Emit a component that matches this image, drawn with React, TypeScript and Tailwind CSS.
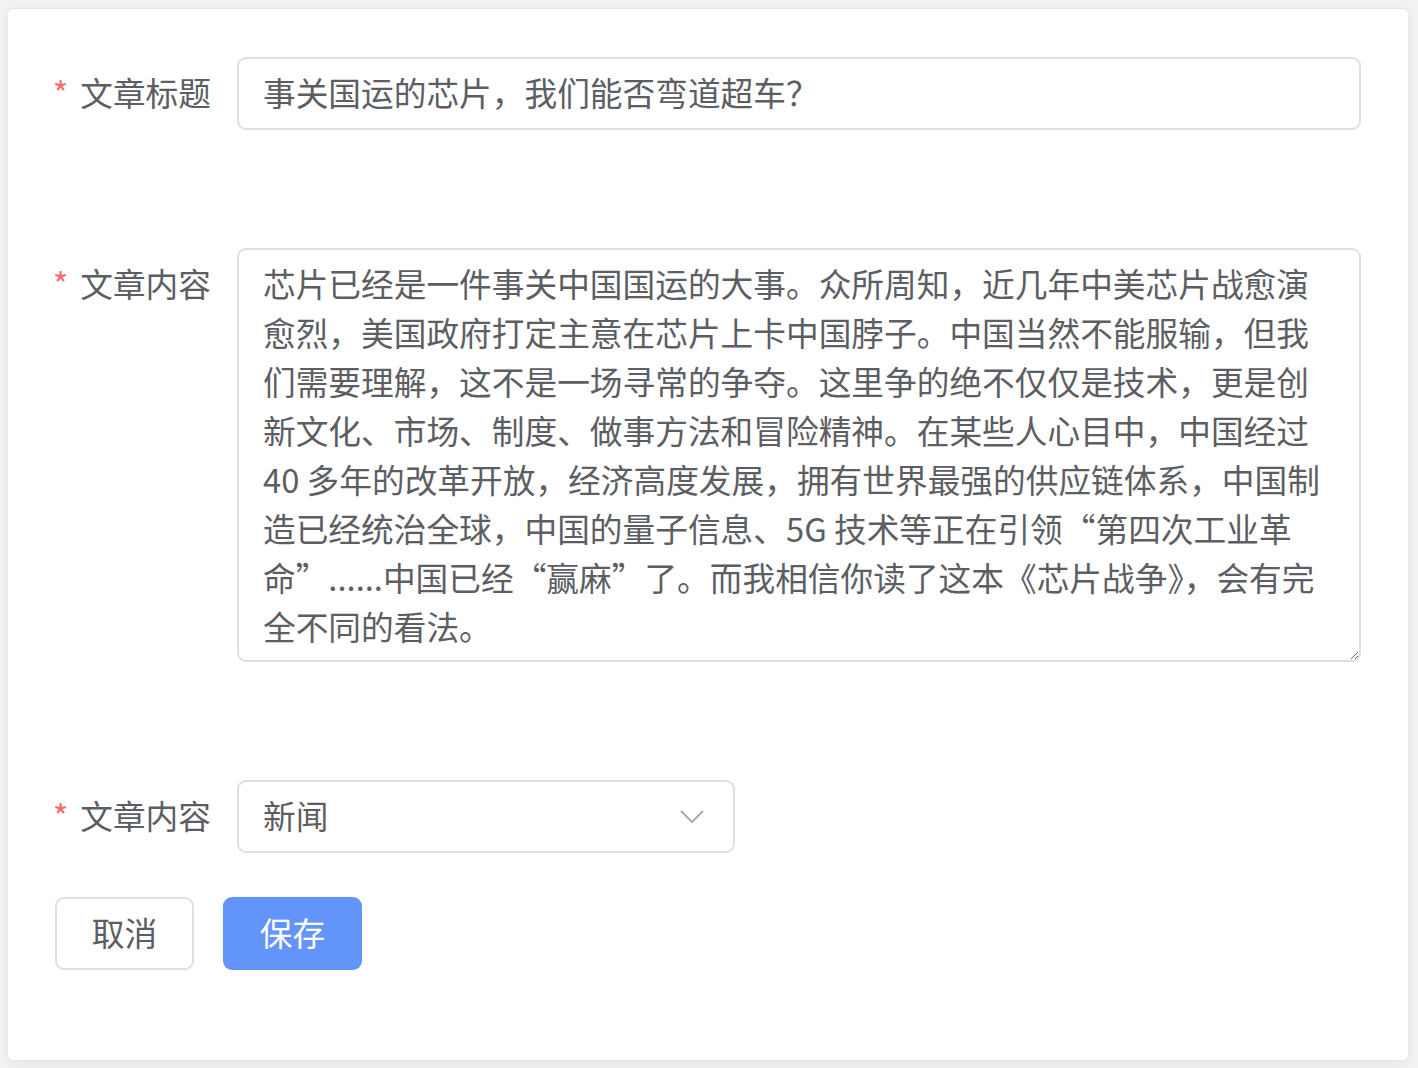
import React from "react";

const font = { fontFamily: '"Noto Sans CJK SC", "Liberation Sans", sans-serif' };

const content = [
  "芯片已经是一件事关中国国运的大事。众所周知，近几年中美芯片战愈演",
  "愈烈，美国政府打定主意在芯片上卡中国脖子。中国当然不能服输，但我",
  "们需要理解，这不是一场寻常的争夺。这里争的绝不仅仅是技术，更是创",
  "新文化、市场、制度、做事方法和冒险精神。在某些人心目中，中国经过",
  "40 多年的改革开放，经济高度发展，拥有世界最强的供应链体系，中国制",
  "造已经统治全球，中国的量子信息、5G 技术等正在引领“第四次工业革",
  "命”......中国已经“赢麻”了。而我相信你读了这本《芯片战争》，会有完",
  "全不同的看法。",
].join("\n");

function Label({ text }: { text: string }) {
  return (
    <label className="flex h-[73px] w-[182px] shrink-0 items-center justify-end whitespace-nowrap pb-[4px] pr-[26px] text-[32.7px] text-[#5c5e63]">
      <span className="mr-[12px] text-[#f56c6c]">*</span>
      <span>{text}</span>
    </label>
  );
}

export default function App() {
  return (
    <div className="min-h-screen bg-[#f2f2f2] pl-[7px] pt-[8px]" style={font}>
      <div className="h-[1053px] w-[1402px] rounded-[6px] border border-[#e4e7ed] bg-white shadow-[0_2px_10px_0_rgba(0,0,0,0.06)]">
        <form className="pl-[47px] pt-[48px]" onSubmit={(e) => e.preventDefault()}>
          <div className="flex items-start">
            <Label text="文章标题" />
            <input
              defaultValue="事关国运的芯片，我们能否弯道超车？"
              className="h-[73px] w-[1124px] rounded-[9px] border-2 border-[#dcdfe6] bg-white px-[24px] pb-[5px] text-[32.7px] text-[#5c5e63] outline-none"
            />
          </div>

          <div className="mt-[118px] flex items-start">
            <Label text="文章内容" />
            <textarea
              defaultValue={content}
              wrap="off"
              className="h-[414px] w-[1124px] resize-y overflow-hidden rounded-[9px] border-2 border-[#dcdfe6] bg-white px-[24px] pt-[8px] text-[32.7px] leading-[49px] text-[#5c5e63] outline-none"
            />
          </div>

          <div className="mt-[118px] flex items-start">
            <Label text="文章内容" />
            <div className="flex h-[73px] w-[498px] cursor-pointer items-center justify-between rounded-[9px] border-2 border-[#dcdfe6] bg-white pl-[24px] pr-[29px] text-[32.7px] text-[#5c5e63]">
              <span className="pb-[4px]">新闻</span>
              <svg width="24" height="14" viewBox="0 0 24 14" fill="none">
                <polyline points="1.5,1.5 12,12 22.5,1.5" stroke="#a8abb2" strokeWidth="2" strokeLinecap="round" strokeLinejoin="round" />
              </svg>
            </div>
          </div>

          <div className="mt-[44px] flex gap-[29px]">
            <button
              type="button"
              className="h-[73px] w-[139px] rounded-[9px] border-2 border-[#dcdfe6] bg-white pb-[4px] text-[32.7px] text-[#5c5e63]"
            >
              取消
            </button>
            <button
              type="submit"
              className="h-[73px] w-[139px] rounded-[9px] bg-[#6394fa] pb-[4px] text-[32.7px] text-white"
            >
              保存
            </button>
          </div>
        </form>
      </div>
    </div>
  );
}
